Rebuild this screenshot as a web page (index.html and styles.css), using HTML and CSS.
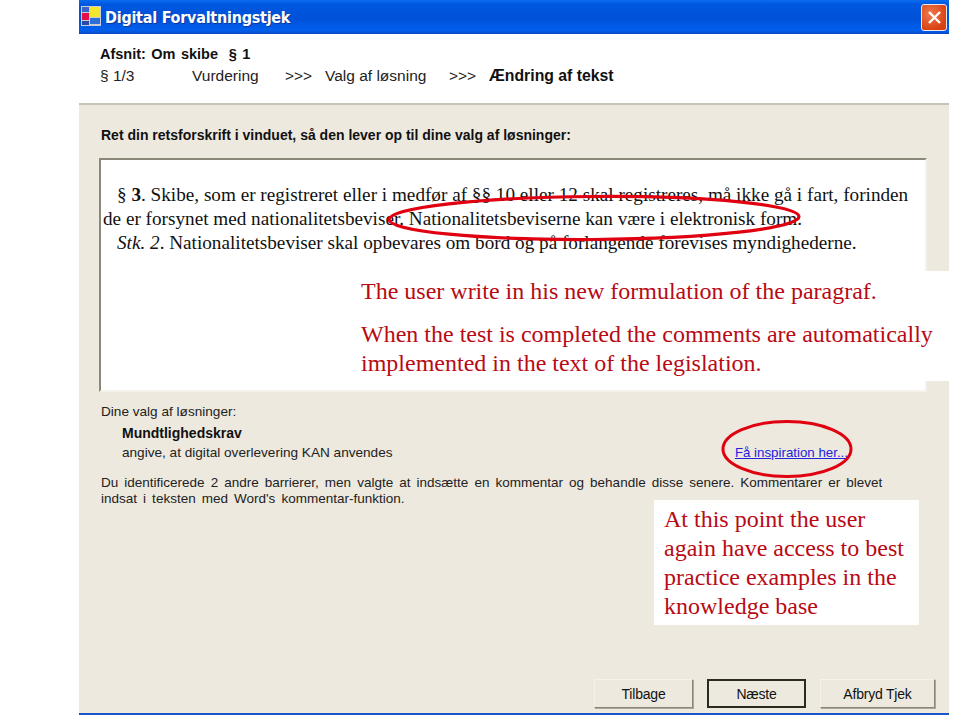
FILE: index.html
```html
<!DOCTYPE html>
<html lang="da">
<head>
<meta charset="utf-8">
<title>Digital Forvaltningstjek</title>
<link rel="stylesheet" href="styles.css">
</head>
<body>
<div class="window">
  <div class="titlebar">
    <svg class="appicon" width="20" height="20" viewBox="0 0 20 20">
      <rect x="0" y="0" width="20" height="20" fill="#c8cdd8"/>
      <rect x="1" y="1" width="7" height="5" fill="#3a62c8"/>
      <rect x="9" y="1" width="10" height="10" fill="#f4e72c"/>
      <rect x="1" y="7" width="7" height="7" fill="#e0104a"/>
      <rect x="9" y="12" width="10" height="6" fill="#2e6fd8"/>
      <rect x="1" y="15" width="7" height="4" fill="#2a4aa8"/>
    </svg>
    <span class="title">Digital Forvaltningstjek</span>
    <span class="close">
      <svg width="15" height="15" viewBox="0 0 15 15"><path d="M2 2 L13 13 M13 2 L2 13" stroke="#fff" stroke-width="2.4" fill="none"/></svg>
    </span>
  </div>
  <header class="head">
    <div class="section">Afsnit: Om skibe&nbsp; § 1</div>
    <div class="steps">
      <span class="step-num">§ 1/3</span>
      <span class="step-a">Vurdering</span>
      <span class="arrows">&gt;&gt;&gt;</span>
      <span class="step-b">Valg af løsning</span>
      <span class="arrows">&gt;&gt;&gt;</span>
      <strong class="step-c">Ændring af tekst</strong>
    </div>
  </header>
  <main class="content">
    <p class="prompt">Ret din retsforskrift i vinduet, så den lever op til dine valg af løsninger:</p>
    <div class="editor">
      <p class="line indent">§ <b>3</b>. Skibe, som er registreret eller i medfør af §§ 10 eller 12 skal registreres, må ikke gå i fart, forinden</p>
      <p class="line">de er forsynet med nationalitetsbeviser. Nationalitetsbeviserne kan være i elektronisk form.</p>
      <p class="line indent"><i>Stk. 2</i>. Nationalitetsbeviser skal opbevares om bord og på forlangende forevises myndighederne.</p>
    </div>
    <div class="choices">
      <div>Dine valg af løsninger:</div>
      <div class="choice-name">Mundtlighedskrav</div>
      <div class="choice-row">
        <span>angive, at digital overlevering KAN anvendes</span>
        <a class="link" href="#">Få inspiration her...</a>
      </div>
    </div>
    <p class="note">Du identificerede 2 andre barrierer, men valgte at indsætte en kommentar og behandle disse senere. Kommentarer er blevet<br>indsat i teksten med Word's kommentar-funktion.</p>
    <div class="buttons">
      <button class="btn">Tilbage</button>
      <button class="btn primary">Næste</button>
      <button class="btn wide">Afbryd Tjek</button>
    </div>
  </main>
</div>

<div class="callout callout-top">
  <p>The user write in his new formulation of the paragraf.</p>
  <p>When the test is completed the comments are automatically implemented in the text of the legislation.</p>
</div>
<div class="callout callout-bottom">At this point the user again have access to best practice examples in the knowledge base</div>

<svg class="ring" width="960" height="720" viewBox="0 0 960 720">
  <ellipse cx="594" cy="218" rx="205" ry="21.5" fill="none" stroke="#e00010" stroke-width="3.2" transform="rotate(-0.4 594 218)"/>
  <ellipse cx="787" cy="449" rx="64" ry="27.5" fill="none" stroke="#e00010" stroke-width="3"/>
</svg>
</body>
</html>
```
FILE: styles.css
```css
html, body { margin: 0; padding: 0; background: #fff; }
body { width: 960px; height: 720px; overflow: hidden; position: relative; font-family: "Liberation Sans", Arial, sans-serif; color: #111; }

.window { width: 870px; height: 715px; margin-left: 79px; display: flex; flex-direction: column; border-bottom: 2px solid #1d55c8; box-sizing: border-box; }

.titlebar { height: 34px; flex: none; display: flex; align-items: center; padding: 0 2px 0 2px; background: linear-gradient(#0a6cf0 0%, #0058e0 12%, #0050d8 55%, #0060ee 88%, #0a48c8 100%); }
.appicon { flex: none; margin-top: -2px; }
.title { margin-left: 4px; color: #fff; font: bold 16px "DejaVu Sans", sans-serif; font-stretch: condensed; letter-spacing: -0.25px; text-shadow: 1px 1px 0 #0a3aa0; flex: 1; }
.close { width: 26px; height: 27px; box-sizing: border-box; border: 1px solid #f0e6e6; border-radius: 3px; background: radial-gradient(circle at 35% 35%, #ee7a50, #d84010 75%); display: flex; align-items: center; justify-content: center; }

.head { flex: none; box-sizing: border-box; padding: 11px 0 0 21px; background: #fff; border-bottom: 2px solid #c8c3b8; height: 71px; }
.section { font-weight: bold; font-size: 14.5px; line-height: 18px; word-spacing: 1.4px; }
.steps { display: flex; margin-top: 4px; line-height: 18px; color: #222; font-size: 15.5px; }
.step-num { width: 92px; }
.step-a { width: 93px; }
.arrows { width: 40px; }
.step-b { width: 124px; }
.step-c { color: #111; font-size: 15.8px; }

.content { flex: 1; background: #ede9de; padding: 22px 21px 0 20px; display: flex; flex-direction: column; min-height: 0; }
.prompt { margin: 0 0 14px 2px; font-size: 14px; line-height: 17px; font-weight: bold; }

.editor { width: 828px; height: 234px; box-sizing: border-box; background: #fff; border-top: 2px solid #8a8878; border-left: 2px solid #8a8878; border-right: 2px solid #f4f2ea; border-bottom: 2px solid #f4f2ea; padding: 23px 0 0 2px; font-family: "Liberation Serif", serif; font-size: 19.2px; line-height: 24px; color: #111; }
.line { margin: 0; white-space: nowrap; }
.indent { padding-left: 14px; }

.choices { margin-top: 10px; padding-left: 2px; font-size: 13.6px; line-height: 20.5px; color: #222; }
.choice-name { padding-left: 21px; font-weight: bold; font-size: 14px; line-height: 20px; color: #111; }
.choice-row { display: flex; justify-content: space-between; padding-left: 21px; width: 726px; }
.link { color: #2222dd; text-decoration: underline; font-size: 13.3px; }

.note { margin: 12px 0 0 2px; font-size: 13.5px; line-height: 16px; color: #222; word-spacing: 2.3px; white-space: nowrap; }

.buttons { margin-top: auto; margin-bottom: 5px; display: flex; justify-content: flex-end; gap: 14px; margin-right: -7px; }
.btn { width: 99px; height: 29px; box-sizing: border-box; padding: 0; font: 14px "Liberation Sans", sans-serif; color: #111; background: #ede9de; border: 1px solid; border-color: #f4f2ea #8a8678 #8a8678 #f4f2ea; box-shadow: 1px 1px 0 #aca899; letter-spacing: -0.2px; }
.primary { border: 2px solid #2a2a22; box-shadow: none; }
.wide { width: 115px; }

.callout { position: absolute; background: #fff; color: #b80a14; font-family: "Liberation Serif", serif; font-size: 24px; line-height: 29px; box-sizing: border-box; }
.callout p { margin: 0; }
.callout p + p { margin-top: 14px; }
.callout-top { left: 354px; top: 271px; width: 606px; height: 110px; padding: 6px 0 0 7px; }
.callout-bottom { left: 654px; top: 500px; width: 265px; height: 125px; padding: 5px 10px 0 10px; }

.ring { position: absolute; left: 0; top: 0; pointer-events: none; }
```
